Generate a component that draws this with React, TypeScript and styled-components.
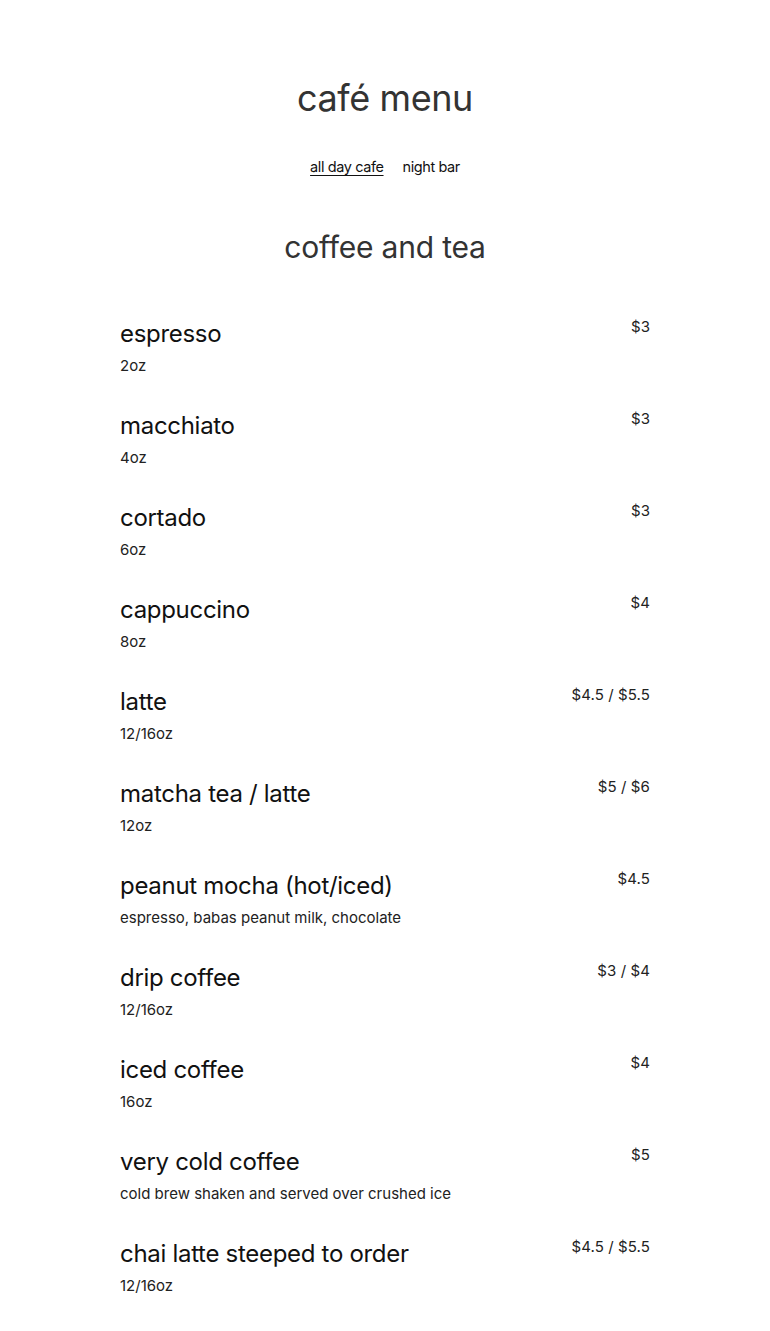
import React from "react";
import styled, { createGlobalStyle } from "styled-components";

const Global = createGlobalStyle`
  html, body { margin: 0; padding: 0; background: #fff; }
  body { font-family: Inter, "Liberation Sans", sans-serif; color: #111; -webkit-font-smoothing: antialiased; }
`;

const Page = styled.main`
  width: 530px;
  margin: 0 auto;
  padding-top: 74px;
  display: flex;
  flex-direction: column;
  align-items: stretch;
`;

const Title = styled.h1`
  margin: 0;
  text-align: center;
  font-size: 36px;
  font-weight: 400;
  line-height: 48px;
  color: #333;
  letter-spacing: -0.4px;
`;

const Nav = styled.nav`
  display: flex;
  justify-content: center;
  gap: 19px;
  margin-top: 35px;
`;

const NavLink = styled.a<{ $active?: boolean }>`
  font-size: 14.5px;
  line-height: 20px;
  color: #111;
  text-decoration: ${(p) => (p.$active ? "underline" : "none")};
  text-underline-offset: 3px;
  letter-spacing: -0.4px;
  cursor: pointer;
`;

const SectionTitle = styled.h2`
  margin: 50px 0 0;
  text-align: center;
  font-size: 30px;
  font-weight: 400;
  line-height: 40px;
  color: #333;
  letter-spacing: -0.2px;
`;

const List = styled.ul`
  list-style: none;
  margin: 51px 0 0;
  padding: 0;
  display: flex;
  flex-direction: column;
`;

const Item = styled.li`
  display: flex;
  justify-content: space-between;
  align-items: flex-start;
  height: 92px;
`;

const Info = styled.div`
  display: flex;
  flex-direction: column;
`;

const Name = styled.div`
  font-size: 24px;
  line-height: 32px;
  color: #111;
  letter-spacing: -0.3px;
`;

const Desc = styled.div`
  margin-top: 7px;
  font-size: 15px;
  line-height: 18px;
  color: #222;
`;

const Price = styled.div`
  font-size: 15px;
  line-height: 18px;
  color: #222;
  letter-spacing: 0.1px;
`;

const items: { name: string; desc: string; price: string }[] = [
  { name: "espresso", desc: "2oz", price: "$3" },
  { name: "macchiato", desc: "4oz", price: "$3" },
  { name: "cortado", desc: "6oz", price: "$3" },
  { name: "cappuccino", desc: "8oz", price: "$4" },
  { name: "latte", desc: "12/16oz", price: "$4.5 / $5.5" },
  { name: "matcha tea / latte", desc: "12oz", price: "$5 / $6" },
  { name: "peanut mocha (hot/iced)", desc: "espresso, babas peanut milk, chocolate", price: "$4.5" },
  { name: "drip coffee", desc: "12/16oz", price: "$3 / $4" },
  { name: "iced coffee", desc: "16oz", price: "$4" },
  { name: "very cold coffee", desc: "cold brew shaken and served over crushed ice", price: "$5" },
  { name: "chai latte steeped to order", desc: "12/16oz", price: "$4.5 / $5.5" },
  { name: "hot chocolate", desc: "12oz", price: "$4" },
];

export default function App() {
  return (
    <>
      <Global />
      <Page>
        <Title>café menu</Title>
        <Nav>
          <NavLink $active>all day cafe</NavLink>
          <NavLink>night bar</NavLink>
        </Nav>
        <SectionTitle>coffee and tea</SectionTitle>
        <List>
          {items.map((it) => (
            <Item key={it.name}>
              <Info>
                <Name>{it.name}</Name>
                <Desc>{it.desc}</Desc>
              </Info>
              <Price>{it.price}</Price>
            </Item>
          ))}
        </List>
      </Page>
    </>
  );
}
